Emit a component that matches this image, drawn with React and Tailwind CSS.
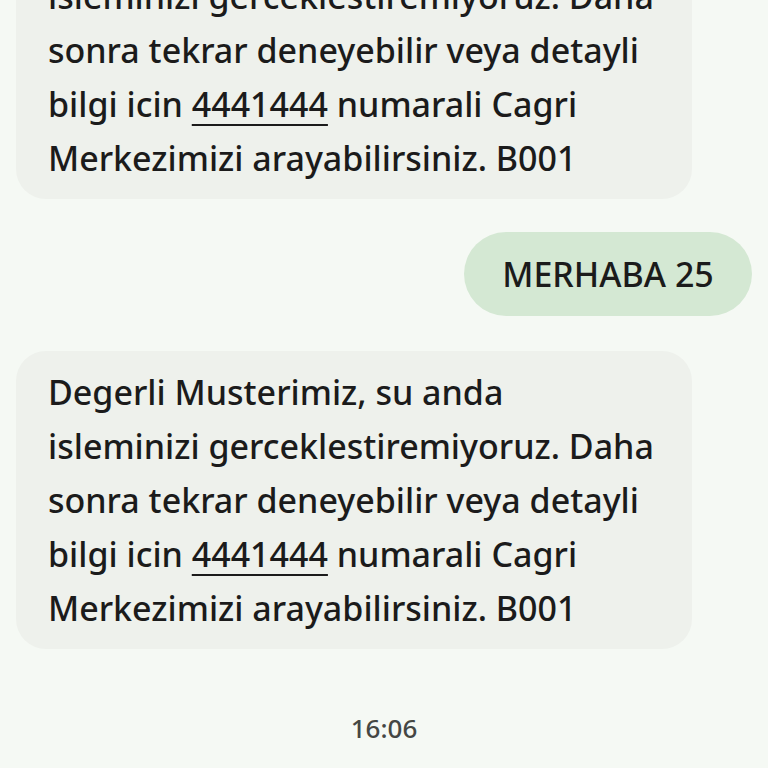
const lines = (
  <>
    <span className="block">Degerli Musterimiz, su anda</span>
    <span className="block">isleminizi gerceklestiremiyoruz. Daha</span>
    <span className="block">sonra tekrar deneyebilir veya detayli</span>
    <span className="block">
      bilgi icin{' '}
      <span className="underline decoration-2 underline-offset-[7px]">4441444</span>{' '}
      numarali Cagri
    </span>
    <span className="block">Merkezimizi arayabilirsiniz. B001</span>
  </>
);

function Received() {
  return (
    <div className="w-[676px] ml-4 whitespace-nowrap rounded-[30px] bg-[#eef1ec] px-8 py-[14px] text-[34px] font-medium leading-[54px] text-[#1b1b1b]">
      {lines}
    </div>
  );
}

export default function App() {
  return (
    <div
      className="h-[768px] w-[768px] overflow-hidden bg-[#f5f9f4]"
      style={{ fontFamily: '"Noto Sans", "Open Sans", sans-serif' }}
    >
      <div className="-mt-[99px] flex flex-col">
        <Received />
        <div className="mt-[33px] flex justify-end pr-4">
          <div className="flex h-[84px] w-[288px] items-center justify-center rounded-full bg-[#d4e8d3] text-[34px] font-medium text-[#1b1b1b]">
            MERHABA 25
          </div>
        </div>
        <div className="mt-[35px]">
          <Received />
        </div>
        <div className="mt-[60px] text-center text-[26px] font-medium text-[#444744]">16:06</div>
      </div>
    </div>
  );
}
